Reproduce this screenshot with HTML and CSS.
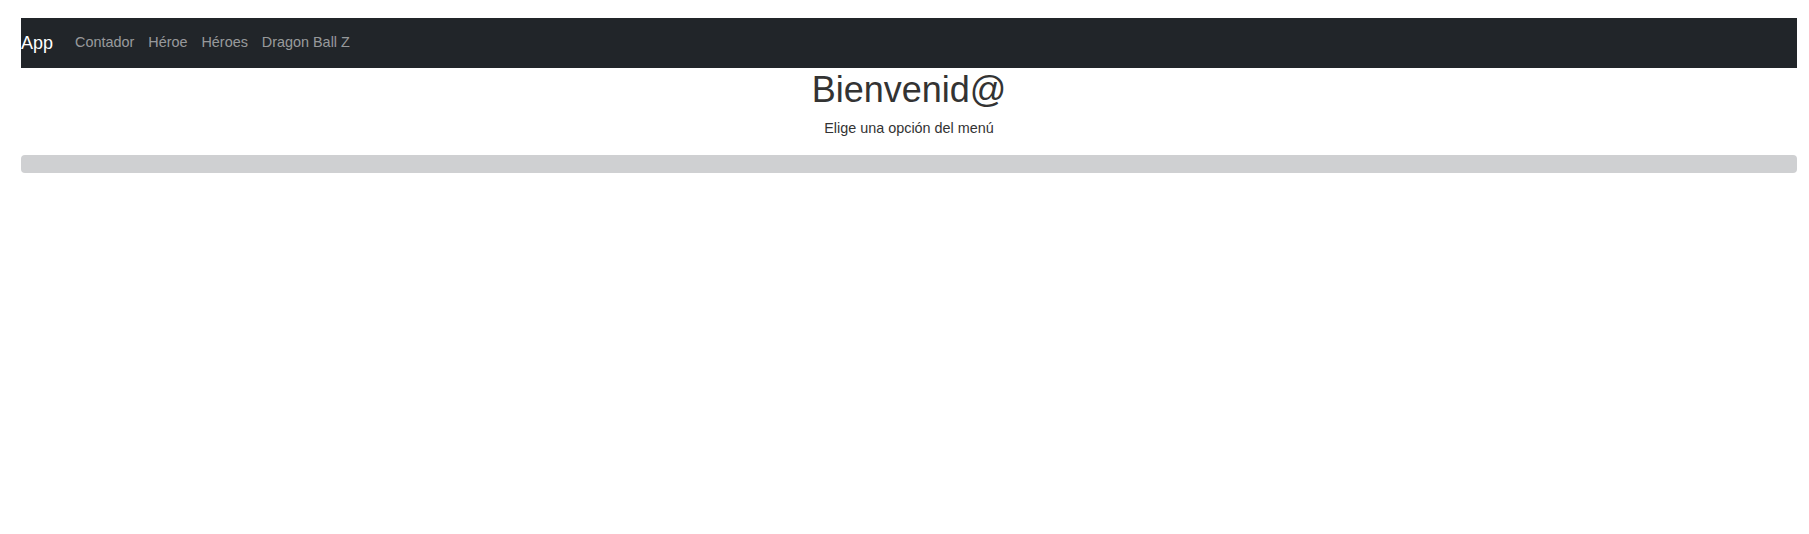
FILE: index.html
```html
<!DOCTYPE html>
<html lang="es">
<head>
<meta charset="utf-8">
<title>App</title>
<link rel="stylesheet" href="styles.css">
</head>
<body>
<div class="page">
  <nav class="navbar">
    <a class="brand" href="#">App</a>
    <ul class="nav-links">
      <li><a href="#">Contador</a></li>
      <li><a href="#">Héroe</a></li>
      <li><a href="#">Héroes</a></li>
      <li><a href="#">Dragon Ball Z</a></li>
    </ul>
  </nav>
  <main class="welcome">
    <h1 class="title">Bienvenid@</h1>
    <p class="subtitle">Elige una opción del menú</p>
  </main>
  <div class="progress"></div>
</div>
</body>
</html>
```
FILE: styles.css
```css
html, body {
  margin: 0;
  padding: 0;
  background: #ffffff;
}
body {
  font-family: "Liberation Sans", Arial, Helvetica, sans-serif;
  font-size: 14.4px;
  line-height: 1.5;
  color: #333333;
}
.page {
  padding: 18px 12px 0 21px;
}
.navbar {
  display: flex;
  align-items: center;
  height: 50px;
  background: #212529;
}
.brand {
  font-size: 18px;
  line-height: 27px;
  color: #ffffff;
  text-decoration: none;
  margin-right: 15px;
}
.nav-links {
  display: flex;
  list-style: none;
  margin: 0;
  padding: 0;
}
.nav-links a {
  display: block;
  padding: 8px 7px;
  font-size: 14.4px;
  color: rgba(255, 255, 255, 0.55);
  text-decoration: none;
}
.welcome {
  text-align: center;
}
.title {
  margin: 1.5px 0 0;
  font-size: 36px;
  font-weight: 400;
  line-height: 1.1;
}
.subtitle {
  margin: 9px 0 0;
}
.progress {
  margin-top: 15.6px;
  height: 17.5px;
  border-radius: 4px;
  background: #cfd0d2;
}
```
